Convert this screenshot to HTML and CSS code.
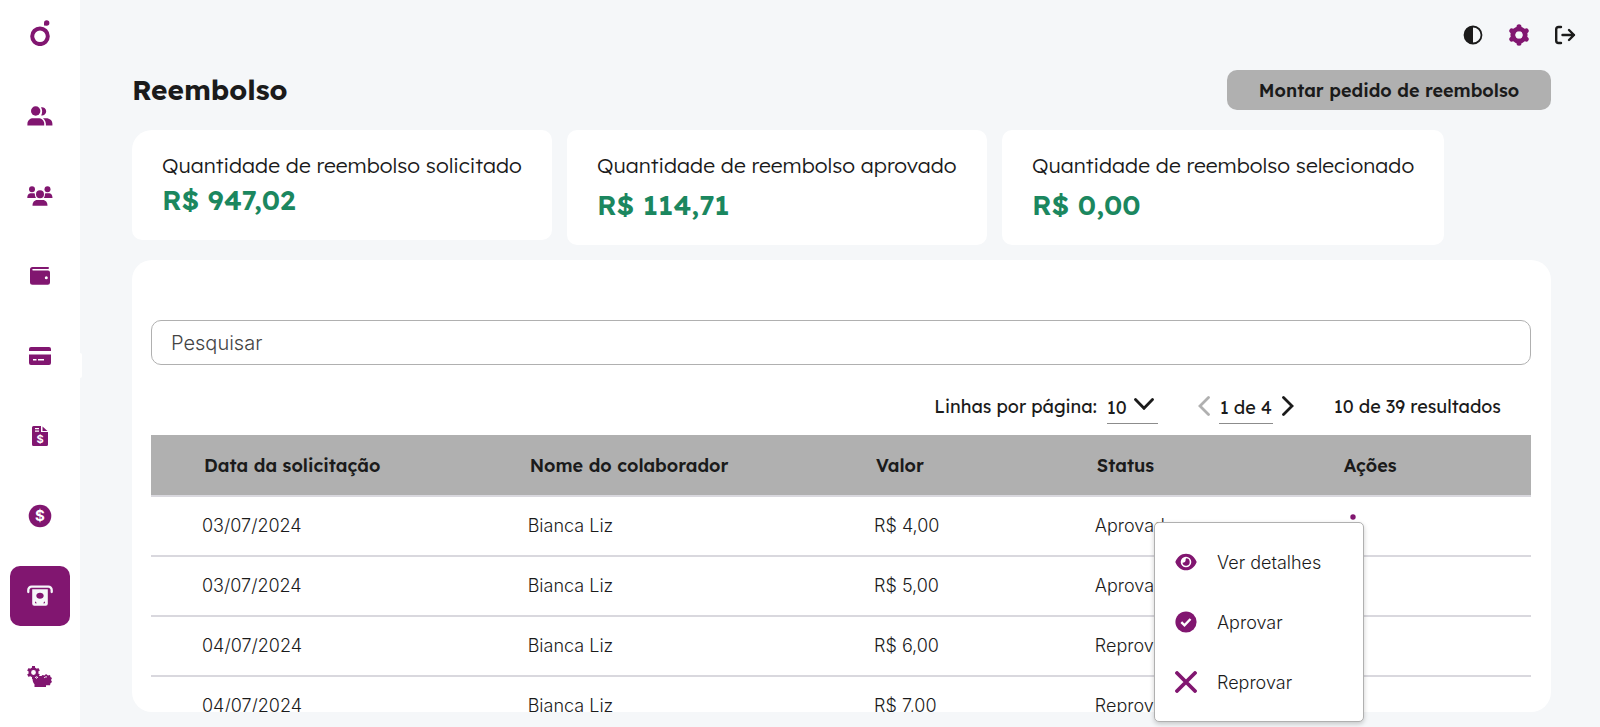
FILE: index.html
```html
<!DOCTYPE html>
<html lang="pt-BR">
<head>
    <meta charset="UTF-8">
    <meta name="viewport" content="width=device-width, initial-scale=1.0">
    <title>Reembolso</title>
    <link rel="stylesheet" href="styles.css">
</head>
<body>
    <nav class="sidebar">
        <a href="#" class="logo" aria-label="Início">
            <svg width="20" height="26" viewBox="0 0 20 26"><circle cx="10" cy="16.300" r="7.800" fill="none" stroke="currentColor" stroke-width="4"/><path d="M14 5.500V3a2.700 2.700 0 1 1 2.700 2.700z" fill="currentColor"/></svg>
        </a>
        <a href="#" aria-label="Usuários">
            <svg width="26" height="20" viewBox="0 0 26 20" fill="currentColor"><circle cx="8.700" cy="5" r="4.700"/><path d="M.4 19.500v-1.700c0-3.600 3-5.600 5.600-5.600h5.400c3 0 5.800 2 5.800 5.600v1.700z"/><path d="M14 1.300a4.200 4.200 0 1 1 .2 8.200c1.300-2.500 1.300-5.700-.2-8.200z"/><path d="M16 12.200h3.200c3.600 0 6.200 2.200 6.200 5.600v1.700h-6.500c.2-3-.7-5.600-2.900-7.300z"/></svg>
        </a>
        <a href="#" aria-label="Grupos">
            <svg width="26" height="20" viewBox="0 0 26 20" fill="currentColor"><circle cx="5" cy="3.200" r="3"/><circle cx="20.500" cy="3.200" r="3"/><circle cx="13" cy="8.200" r="4"/><path d="M.3 12c0-3.500 1.700-4.700 4-4.700h2c.6 0 1.100.1 1.600.4-.2 1.700.3 3.200 1.300 4.300zM25.500 12c0-3.500-1.700-4.700-4-4.700h-2c-.6 0-1.100.1-1.600.4.2 1.700-.3 3.200-1.300 4.300zM5.500 19.800c0-3.600 1.800-5.800 4.800-5.800h5.400c3 0 4.800 2.200 4.800 5.800z"/></svg>
        </a>
        <a href="#" aria-label="Carteira">
            <svg width="20" height="18" viewBox="0 0 20 18"><path fill="currentColor" fill-rule="evenodd" d="M2.500 0H18a1 1 0 0 1 0 2H3a.5.5 0 0 0 0 1.500h15A2 2 0 0 1 20 5.500v10a2.200 2.200 0 0 1-2.200 2.200H2.500A2.500 2.500 0 0 1 0 15.200V2.500A2.500 2.500 0 0 1 2.500 0zM16.300 9.200a1.500 1.500 0 1 0 0 3 1.500 1.500 0 0 0 0-3z"/></svg>
        </a>
        <a href="#" aria-label="Cartões">
            <svg width="22" height="18" viewBox="0 0 22 18"><path fill="currentColor" fill-rule="evenodd" d="M2 0h18a2 2 0 0 1 2 2v2H0V2a2 2 0 0 1 2-2zM0 7.500h22V16a2 2 0 0 1-2 2H2a2 2 0 0 1-2-2zM4 12v1.500h3.500V12zM9 12v1.500h6V12z"/></svg>
        </a>
        <a href="#" aria-label="Faturas">
            <svg width="16" height="20" viewBox="0 0 16 20"><path fill="currentColor" fill-rule="evenodd" d="M1.500 0H9v6h7v12.500a1.500 1.500 0 0 1-1.500 1.500h-13A1.500 1.500 0 0 1 0 18.500v-17A1.500 1.500 0 0 1 1.500 0zM3 2v1.200h4V2zM3 4.500v1.200h4V4.500z"/><path fill="currentColor" d="M10.500.5 15.500 5h-5z"/><text x="8" y="17" class="coin-sign" font-size="11">$</text></svg>
        </a>
        <a href="#" aria-label="Pagamentos">
            <svg width="24" height="24" viewBox="0 0 24 24"><circle cx="12" cy="12" r="11.300" fill="currentColor"/><text x="12" y="17" class="coin-sign" font-size="15">$</text></svg>
        </a>
        <a href="#" class="active" aria-label="Reembolso">
            <svg width="26" height="22" viewBox="0 0 26 22"><path d="M1.300 7V5a3.300 3.300 0 0 1 3.300-3.300h16.800A3.300 3.300 0 0 1 24.700 5v2" fill="none" stroke="currentColor" stroke-width="2.300" stroke-linecap="round"/><path fill="currentColor" fill-rule="evenodd" d="M5.200 4.200h15.600v14.600a2 2 0 0 1-2 2H7.200a2 2 0 0 1-2-2zM13 7.700c-2 0-3.700 1.300-3.700 3s1.700 3 3.700 3 3.700-1.300 3.700-3-1.700-3-3.700-3zM8 16.200v2h2zM18 16.200v2h-2z"/></svg>
        </a>
        <a href="#" aria-label="Configurações gerais">
            <svg width="26" height="24" viewBox="0 -2 26 24"><circle cx="6.500" cy="6.500" r="3.700" fill="none" stroke="currentColor" stroke-width="2.600"/><path d="M6.500 0v2.500M6.500 10.500V13M.9 3.200l2 1.200M10 8.500l2.100 1.200M.9 9.700l2-1.200M10 4.400l2.100-1.200" stroke="currentColor" stroke-width="3"/><path fill="currentColor" d="M5.500 12.500c2 0 4-.8 5-2.500h4l1-1 2 .5 1.500-1.500 2 1.500 2-.5.5 2 1.500 1-1 2 1 2-1.500 1.200-.5 2H19V21H7.500v-2.800c-1.500-1.300-2-3.700-2-5.700z"/><path d="M9 12.500l2-1.500M17 12c1-1 2-1.300 3-1" stroke="#fff" fill="none"/></svg>
        </a>
    </nav>

    <main class="main">
        <div class="topbar">
            <button type="button" aria-label="Contraste">
                <svg width="20" height="20" viewBox="0 0 20 20"><circle cx="10" cy="10" r="8.500" fill="none" stroke="currentColor" stroke-width="1.800"/><path d="M10 1.500a8.500 8.500 0 0 0 0 17z" fill="currentColor"/></svg>
            </button>
            <button type="button" class="gear" aria-label="Configurações">
                <svg width="22" height="22" viewBox="0 0 22 22"><circle cx="11" cy="11" r="6.200" fill="none" stroke="currentColor" stroke-width="4.800"/><path d="M11 2.700v2M11 17.300v2M3.800 6.800l1.700 1M16.500 14.200l1.700 1M3.800 15.200l1.700-1M16.500 7.800l1.700-1" stroke="currentColor" stroke-width="5" stroke-linecap="round"/></svg>
            </button>
            <button type="button" aria-label="Sair">
                <svg width="22" height="20" viewBox="0 0 22 20" fill="none" stroke="currentColor" stroke-width="2.400" stroke-linecap="round" stroke-linejoin="round"><path d="M7 2H4.500C3 2 2.200 2.800 2.200 4.200v11.600C2.200 17.200 3 18 4.500 18H7M8.500 10H20M15 5l5 5-5 5"/></svg>
            </button>
        </div>

        <div class="title-row">
            <h1>Reembolso</h1>
            <button type="button" class="btn-request">Montar pedido de reembolso</button>
        </div>

        <div class="cards">
            <div class="card card-first">
                <p>Quantidade de reembolso solicitado</p>
                <strong>R$ 947,02</strong>
            </div>
            <div class="card">
                <p>Quantidade de reembolso aprovado</p>
                <strong>R$ 114,71</strong>
            </div>
            <div class="card card-wide">
                <p>Quantidade de reembolso selecionado</p>
                <strong>R$ 0,00</strong>
            </div>
        </div>

        <section class="panel">
            <input type="text" class="search" placeholder="Pesquisar" aria-label="Pesquisar">

            <div class="pagination">
                <label for="rows">Linhas por página:</label>
                <div class="rows-select">
                    <select id="rows">
                        <option>10</option>
                        <option>20</option>
                        <option>50</option>
                    </select>
                    <svg width="20" height="12" viewBox="0 0 20 12"><path d="M1.500 1.500 10 10.300l8.500-8.800"/></svg>
                </div>
                <div class="pager">
                    <button type="button" aria-label="Página anterior" disabled>
                        <svg width="12" height="20" viewBox="0 0 12 20"><path d="M10.500 1.500 2 10l8.500 8.500"/></svg>
                    </button>
                    <input type="text" value="1 de 4" aria-label="Página atual">
                    <button type="button" aria-label="Próxima página">
                        <svg width="12" height="20" viewBox="0 0 12 20"><path d="M1.500 1.500 10 10l-8.500 8.500"/></svg>
                    </button>
                </div>
                <span>10 de 39 resultados</span>
            </div>

            <table>
                <thead>
                    <tr>
                        <th class="col-date">Data da solicitação</th>
                        <th class="col-name">Nome do colaborador</th>
                        <th class="col-value">Valor</th>
                        <th class="col-status">Status</th>
                        <th>Ações</th>
                    </tr>
                </thead>
                <tbody>
                    <tr>
                        <td>03/07/2024</td>
                        <td>Bianca Liz</td>
                        <td>R$ 4,00</td>
                        <td>Aprovado</td>
                        <td>
                            <button type="button" class="kebab" aria-label="Ações">
                                <svg width="6" height="22" viewBox="0 0 6 22" fill="currentColor"><circle cx="3" cy="3" r="2.700"/><circle cx="3" cy="11" r="2.700"/><circle cx="3" cy="19" r="2.700"/></svg>
                            </button>
                        </td>
                    </tr>
                    <tr>
                        <td>03/07/2024</td>
                        <td>Bianca Liz</td>
                        <td>R$ 5,00</td>
                        <td>Aprovado</td>
                        <td></td>
                    </tr>
                    <tr>
                        <td>04/07/2024</td>
                        <td>Bianca Liz</td>
                        <td>R$ 6,00</td>
                        <td>Reprovado</td>
                        <td></td>
                    </tr>
                    <tr>
                        <td>04/07/2024</td>
                        <td>Bianca Liz</td>
                        <td>R$ 7,00</td>
                        <td>Reprovado</td>
                        <td></td>
                    </tr>
                </tbody>
            </table>
        </section>

        <div class="menu">
            <button type="button">
                <svg width="22" height="22" viewBox="0 0 22 22"><path fill="currentColor" fill-rule="evenodd" d="M11 2.700c5 0 8.800 3.300 10.700 8.300-1.900 5-5.700 8.300-10.700 8.300S2.200 16 .3 11C2.200 6 6 2.700 11 2.700zM11 5.700a5.300 5.300 0 1 0 0 10.600 5.300 5.300 0 0 0 0-10.600z"/><path fill="currentColor" d="M11 7.300a3.700 3.700 0 1 1-3.600 4.500c1.500.3 3.600-1.200 3.200-3z"/></svg>
                Ver detalhes
            </button>
            <button type="button">
                <svg width="22" height="22" viewBox="0 0 22 22"><circle cx="11" cy="11" r="10.600" fill="currentColor"/><path d="m6.300 11.200 3.200 3.200 6-6.400" fill="none" stroke="#fff" stroke-width="2.400"/></svg>
                Aprovar
            </button>
            <button type="button">
                <svg width="22" height="22" viewBox="0 0 22 22"><path d="m2 2 18 18M20 2 2 20" stroke="currentColor" stroke-width="3.800" stroke-linecap="round"/></svg>
                Reprovar
            </button>
        </div>
    </main>
</body>
</html>
```

FILE: styles.css
```css
* {
    box-sizing: border-box;
}
body {
    display: flex;
    height: 100vh;
    margin: 0;
    overflow: hidden;
    background-color: #f5f7f9;
    color: #1b1b1b;
    font-family: "Lexend", Inter, sans-serif;
    font-size: 18px;
    font-weight: 300;
}
button, input, select {
    margin: 0;
    padding: 0;
    border: none;
    background: none;
    color: inherit;
    font-family: inherit;
    font-size: inherit;
    font-weight: inherit;
}
svg {
    display: block;
    flex-shrink: 0;
}

/* sidebar */
.sidebar {
    position: relative;
    display: flex;
    flex: 0 0 80px;
    flex-direction: column;
    align-items: center;
    gap: 20px;
    background-color: white;
}
.sidebar::after {
    content: "";
    position: absolute;
    top: 353px;
    right: -2px;
    width: 4px;
    height: 25px;
    border-radius: 2px;
    background-color: white;
}
.sidebar a {
    display: flex;
    align-items: center;
    justify-content: center;
    flex: 0 0 60px;
    width: 60px;
    border-radius: 10px;
    color: #811670;
}
.sidebar .logo {
    flex-basis: 66px;
}
.sidebar .active {
    background-color: #811670;
    color: #f5f7f9;
}
.coin-sign {
    fill: white;
    font-family: Inter, sans-serif;
    font-weight: bold;
    text-anchor: middle;
}

.main {
    position: relative;
    display: flex;
    flex: 1;
    flex-direction: column;
    min-width: 0;
    padding: 0 49px 15px 52px;
}
.topbar {
    display: flex;
    align-items: center;
    justify-content: flex-end;
    gap: 24px;
    height: 70px;
    margin-right: -25px;
}
.topbar button {
    display: flex;
    justify-content: center;
    width: 22px;
}
.topbar .gear {
    color: #811670;
}
.title-row {
    display: flex;
    align-items: center;
    justify-content: space-between;
    margin-bottom: 20px;
}
h1 {
    margin: 0;
    font-size: 28px;
    font-weight: 700;
    line-height: 40px;
}
.btn-request {
    width: 324px;
    height: 40px;
    border-radius: 10px;
    background-color: #b0b0b0;
    font-weight: 600;
}

/* cards */
.cards {
    display: flex;
    align-items: flex-start;
    gap: 15px;
    margin-bottom: 15px;
}
.card {
    width: 420px;
    padding: 20px 30px 23px;
    border-radius: 10px;
    background-color: white;
    white-space: nowrap;
}
.card-wide {
    width: 442px;
}
.card p {
    margin: 0 0 7px;
    font-size: 21px;
    line-height: 30px;
}
.card strong {
    display: block;
    color: #1b875f;
    font-size: 28px;
    font-weight: 600;
    line-height: 35px;
}
.card-first {
    border-top-left-radius: 20px;
}
.card-first p {
    margin-bottom: 2px;
}

/* panel */
.panel {
    flex: 1;
    min-height: 0;
    padding: 60px 20px 0 19px;
    overflow: hidden;
    border-radius: 20px;
    background-color: white;
}
.search {
    display: block;
    width: 100%;
    height: 45px;
    padding: 0 19px;
    border: 1px solid #b0b0b0;
    border-radius: 10px;
    font-family: Inter, sans-serif;
    font-size: 20px;
}
.search::placeholder {
    color: #444;
    opacity: 1;
}
.pagination {
    display: flex;
    align-items: center;
    justify-content: flex-end;
    height: 70px;
    padding: 12px 30px 0 0;
    font-weight: 400;
}
.pagination path {
    fill: none;
    stroke: currentColor;
    stroke-width: 2.8;
    stroke-linecap: round;
}
.rows-select {
    position: relative;
    margin: 0 40px 0 10px;
}
.rows-select select {
    width: 51px;
    height: 36px;
    padding-top: 4px;
    border-bottom: 1px solid #8c8c8c;
    appearance: none;
}
.rows-select svg {
    position: absolute;
    top: 10px;
    right: 4px;
    pointer-events: none;
}
.pager {
    display: flex;
    align-items: center;
    gap: 9px;
    margin-right: 40px;
}
.pager input {
    width: 54px;
    height: 36px;
    padding-top: 4px;
    border-bottom: 1px solid #8c8c8c;
    text-align: center;
}
.pager button:disabled {
    color: #b0b0b0;
}
table {
    width: 100%;
    border-collapse: separate;
    border-spacing: 0;
    table-layout: fixed;
}
th, td {
    border-bottom: 2px solid #d9d8de;
    text-align: left;
    white-space: nowrap;
}
th {
    height: 62px;
    padding: 0 0 0 53px;
    background-color: #b0b0b0;
    font-weight: 600;
}
td {
    height: 60px;
    padding: 0 0 2px 51px;
    font-family: Inter, sans-serif;
}
.col-date {
    width: 23.6%;
}
.col-name {
    width: 25.1%;
}
.col-value {
    width: 16%;
}
.col-status {
    width: 17.9%;
}
.kebab {
    display: block;
    margin-left: 8px;
    color: #811670;
}

/* row actions */
.menu {
    position: absolute;
    top: 522px;
    right: 236px;
    width: 210px;
    padding: 9px 0;
    border: 1px solid #b0b0b0;
    border-radius: 5px;
    background-color: white;
    box-shadow: 0 2px 5px rgba(0, 0, 0, 0.2);
}
.menu button {
    display: flex;
    align-items: center;
    gap: 20px;
    width: 100%;
    height: 60px;
    padding-left: 20px;
    font-family: Inter, sans-serif;
}
.menu svg {
    color: #811670;
}
```
